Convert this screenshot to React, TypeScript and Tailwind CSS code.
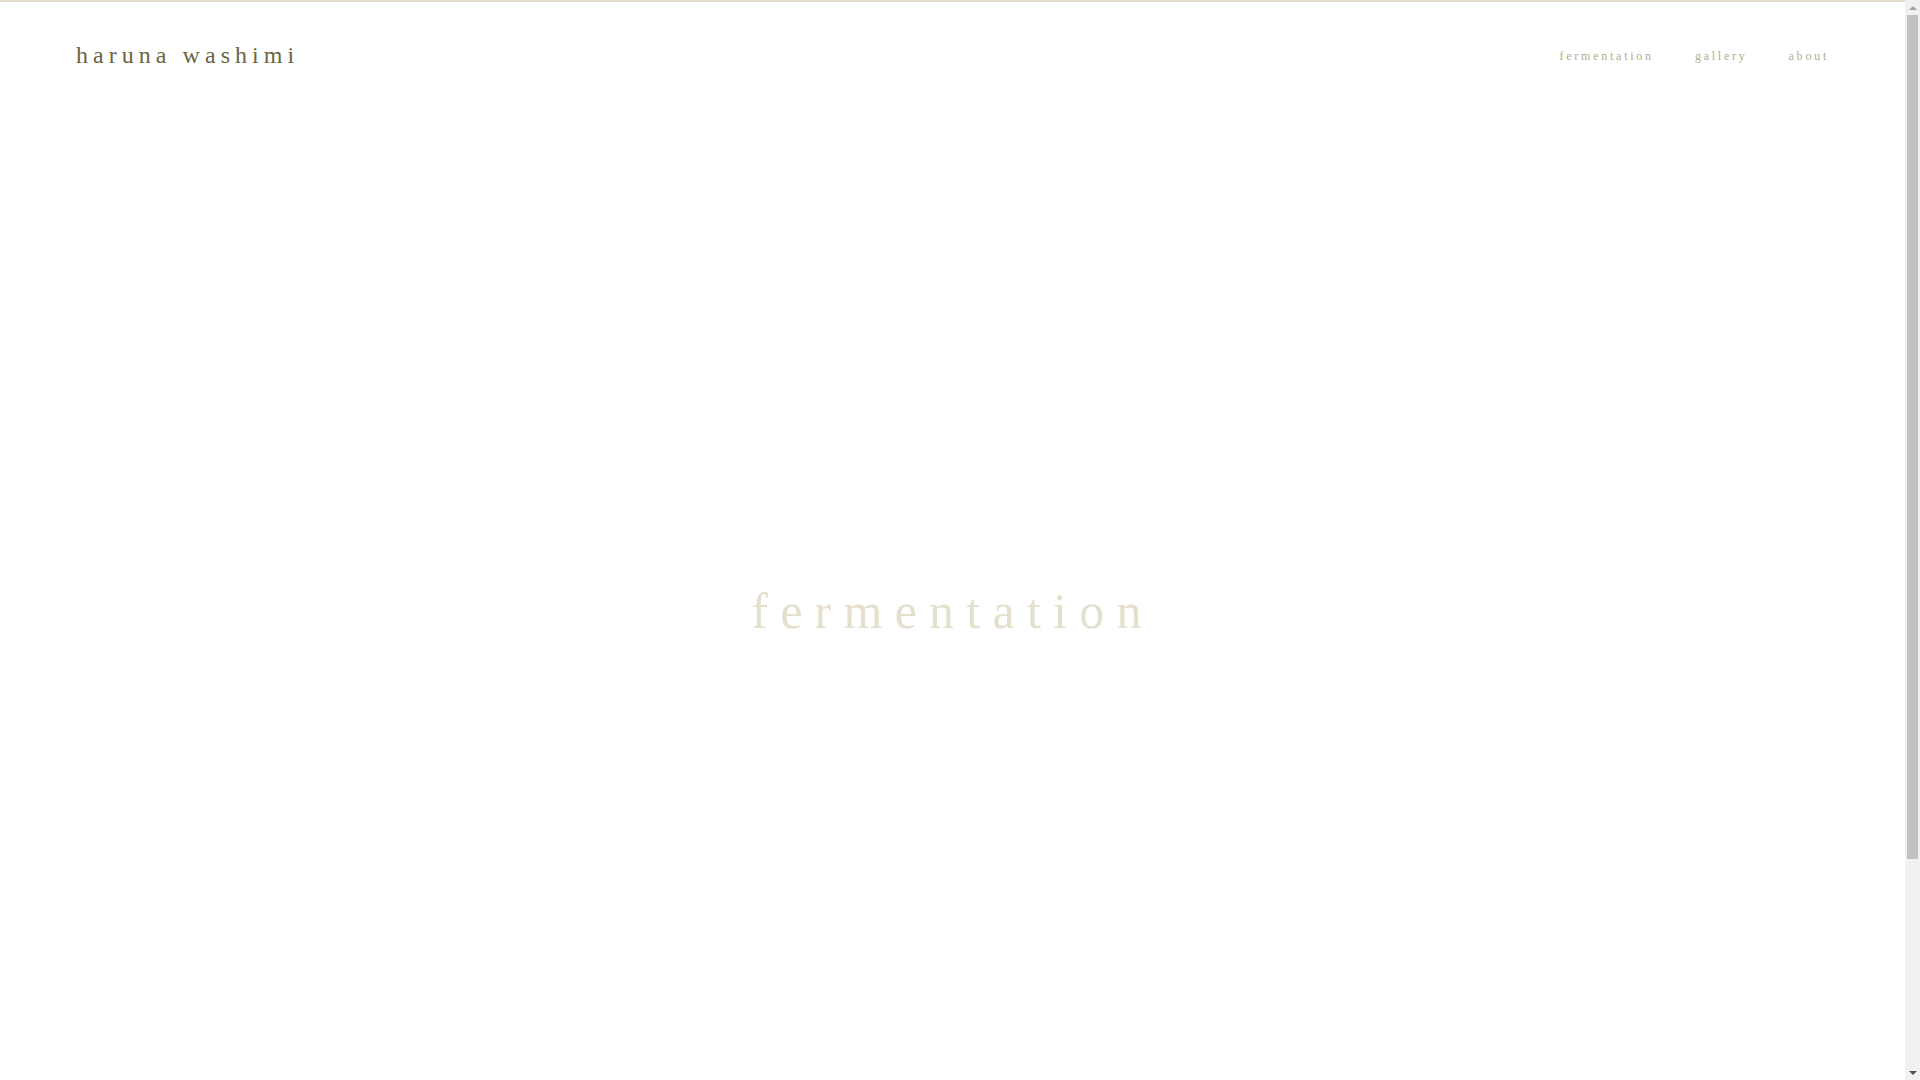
import React from "react";

function ScrollbarStrip() {
  return (
    <div className="w-[15px] h-screen shrink-0 bg-[#f1f1f1] flex flex-col items-center">
      <div className="h-[15px] w-full flex items-center justify-center">
        <svg width="8" height="4" viewBox="0 0 8 4"><polygon points="4,0 8,4 0,4" fill="#a3a3a3" /></svg>
      </div>
      <div className="w-[11px] h-[844px] bg-[#c1c1c1]" />
      <div className="flex-1" />
      <div className="h-[15px] w-full flex items-center justify-center">
        <svg width="8" height="4" viewBox="0 0 8 4"><polygon points="0,0 8,0 4,4" fill="#505050" /></svg>
      </div>
    </div>
  );
}

export default function App() {
  const serif = { fontFamily: '"Liberation Serif", "Times New Roman", serif' };
  return (
    <div className="flex h-screen overflow-hidden bg-white" style={serif}>
      <main className="flex-1 min-w-0">
        <div className="min-h-[1344px] border-t-2 border-[#e2ddc9]">
          <header className="h-[106px] flex items-center justify-between px-[76px]">
            <a className="text-[24px] tracking-[0.21em] text-[#6b6541]">haruna washimi</a>
            <nav className="flex items-center gap-[41px] pt-[2px] text-[12px] tracking-[0.23em] text-[#abb08f]">
              <a>fermentation</a>
              <a>gallery</a>
              <a>about</a>
            </nav>
          </header>
          <section className="h-[1006px] flex items-center justify-center">
            <h1 className="text-[50px] tracking-[0.245em] text-[#e4e0cd] font-normal">fermentation</h1>
          </section>
        </div>
      </main>
      <ScrollbarStrip />
    </div>
  );
}
